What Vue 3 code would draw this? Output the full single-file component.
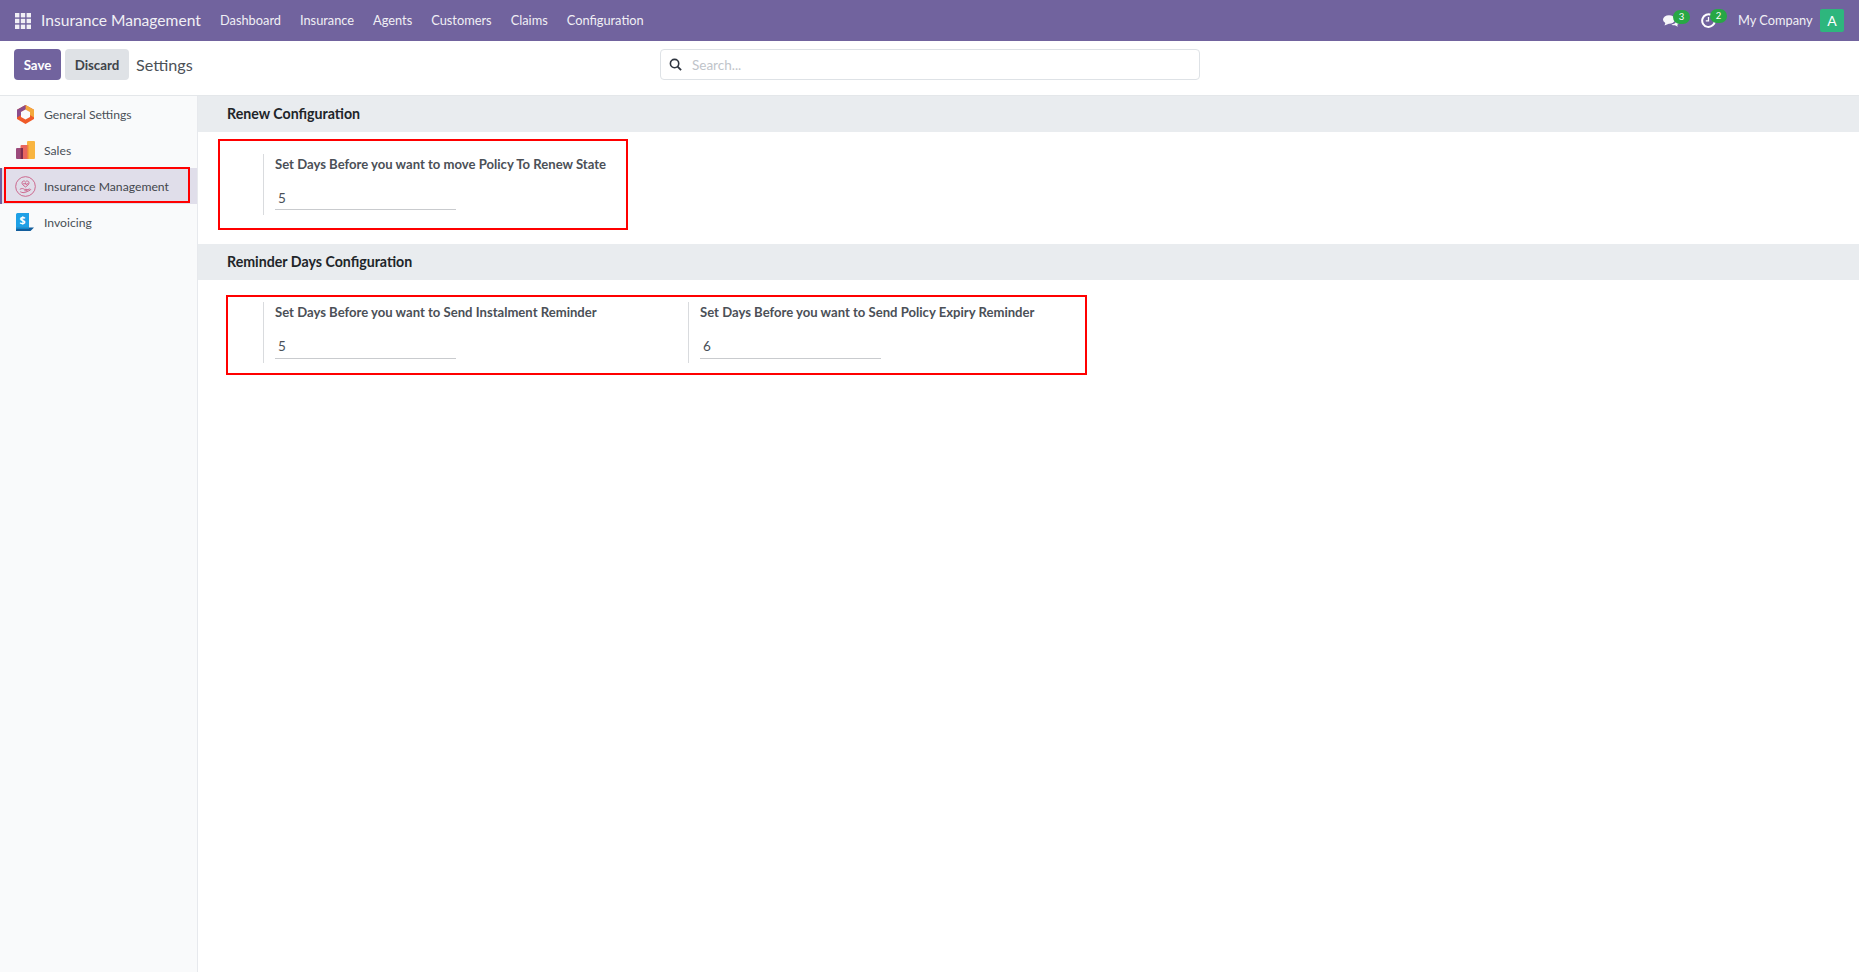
<script setup>
const menus = ['Dashboard', 'Insurance', 'Agents', 'Customers', 'Claims', 'Configuration']
</script>

<template>
  <div class="page">
    <header class="navbar">
      <svg class="apps" width="16" height="16" viewBox="0 0 16 16" fill="#fff">
        <g opacity=".9">
          <rect x="0" y="0" width="4.4" height="4.4" /><rect x="5.8" y="0" width="4.4" height="4.4" /><rect x="11.6" y="0" width="4.4" height="4.4" />
          <rect x="0" y="5.8" width="4.4" height="4.4" /><rect x="5.8" y="5.8" width="4.4" height="4.4" /><rect x="11.6" y="5.8" width="4.4" height="4.4" />
          <rect x="0" y="11.6" width="4.4" height="4.4" /><rect x="5.8" y="11.6" width="4.4" height="4.4" /><rect x="11.6" y="11.6" width="4.4" height="4.4" />
        </g>
      </svg>
      <span class="brand">Insurance Management</span>
      <nav class="menu"><span v-for="m in menus" :key="m">{{ m }}</span></nav>
      <div class="systray">
        <span class="tray-item">
          <svg width="16" height="12" viewBox="0 0 16 12" fill="#fff" opacity=".95"><ellipse cx="6" cy="4.500" rx="6" ry="4.300" /><path d="M2.500 7.500L1.500 10.500 6.500 8.500z" /><path d="M13.500 4.500c2 1 3 2.800 1.800 4.400-.3.400-.7.700-1.100.9l.6 2-2.900-1.500c-1.300.2-2.600-.1-3.500-.8 2.800 0 5.500-2 5.100-5z" /></svg>
          <b class="badge chat">3</b>
        </span>
        <span class="tray-item clock">
          <svg width="15" height="15" viewBox="0 0 15 15" fill="none" stroke="#fff" stroke-width="2"><path d="M10.500 2.100A6.300 6.300 0 1 0 13.800 7.500" /><path d="M7.500 4v3.800H4.800" stroke-width="1.300" /></svg>
          <b class="badge act">2</b>
        </span>
        <span class="company">My Company</span>
        <span class="avatar">A</span>
      </div>
    </header>

    <div class="controlbar">
      <div class="actions">
        <button class="btn primary">Save</button>
        <button class="btn secondary">Discard</button>
        <span class="crumb">Settings</span>
      </div>
      <div class="search">
        <svg width="13" height="13" viewBox="0 0 14 14" fill="none" stroke="#2f3540" stroke-width="1.700"><circle cx="6" cy="6" r="4.500" /><path d="M9.300 9.300L13 13" stroke-width="2" /></svg>
        <span>Search...</span>
      </div>
    </div>

    <div class="body">
      <aside class="sidebar">
        <div class="tab">
          <span class="ico"><svg width="17" height="19" viewBox="0 0 17 19">
            <path d="M8.500 0L17 4.800V14L8.500 19 0 14V4.800z" fill="#f05a28" />
            <path d="M8.500 0L17 4.800V12.500L13 10V7L8.500 4.500z" fill="#f4a93c" />
            <path d="M8.500 0L0 4.800V12.500L4 10V7L8.500 4.500z" fill="#8a4d8c" />
            <path d="M8.500 4.500L13 7v5l-4.500 2.500L4 12V7z" fill="#f9fafb" />
          </svg></span>
          <span>General Settings</span>
        </div>
        <div class="tab">
          <span class="ico"><svg width="19" height="18" viewBox="0 0 19 18"><rect x="0" y="7" width="7" height="11" rx="1" fill="#9c4a7c" /><rect x="4.500" y="4" width="7.500" height="14" rx="1" fill="#e9665e" /><rect x="4.500" y="7" width="2.500" height="11" fill="#7d2c4e" /><rect x="11" y="0" width="8" height="18" rx="1" fill="#f9b541" /><rect x="11" y="4" width="1.500" height="14" fill="#ee8140" /></svg></span>
          <span>Sales</span>
        </div>
        <div class="tab active">
          <span class="ico"><svg width="21" height="21" viewBox="0 0 22 22" fill="none" stroke="#c9557f" stroke-width=".9">
            <circle cx="11" cy="11" r="10.300" />
            <path d="M11 11.500C8.500 9.800 7.300 8.700 7.300 7.200a2 2 0 0 1 3.700-1 2 2 0 0 1 3.700 1c0 1.500-1.200 2.600-3.700 4.300z" />
            <path d="M8.400 8.200h1.800l.7-1 .8 2 .7-1h1.600" />
            <path d="M5 14c2-1.200 3.500-1 5 0h2c1 .3 1 1.400 0 1.500h-2.200M5.500 16.500c2 1 3.800 1.200 5.500.6l5-2.300c.8-.6 0-1.500-1-1.100l-3 1" />
          </svg></span>
          <span>Insurance Management</span>
          <i class="mark sidebar-mark"></i>
        </div>
        <div class="tab">
          <span class="ico"><svg width="18" height="18" viewBox="0 0 18 18"><path d="M0 1.500A1.500 1.500 0 0 1 1.500 0H13v14.500H0z" fill="#1ea0e6" /><path d="M0 14.500A2 2 0 0 0 2 18h12.500l3.500-3.500z" fill="#135d9c" /><path d="M0 14.500h13V16H2a2 2 0 0 0-2 .8z" fill="#0b8ad0" /><text x="6.500" y="11.300" text-anchor="middle" font-size="10.500" font-weight="700" fill="#fff" font-family="Noto Sans, sans-serif">$</text></svg></span>
          <span>Invoicing</span>
        </div>
      </aside>

      <main class="content">
        <h2 class="section-title">Renew Configuration</h2>
        <section class="settings">
          <div class="setting">
            <label>Set Days Before you want to move Policy To Renew State</label>
            <div class="field">5</div>
          </div>
          <i class="mark renew-mark"></i>
        </section>

        <h2 class="section-title">Reminder Days Configuration</h2>
        <section class="settings lower">
          <div class="setting">
            <label>Set Days Before you want to Send Instalment Reminder</label>
            <div class="field">5</div>
          </div>
          <div class="setting">
            <label>Set Days Before you want to Send Policy Expiry Reminder</label>
            <div class="field">6</div>
          </div>
          <i class="mark reminder-mark"></i>
        </section>
      </main>
    </div>
  </div>
</template>

<style>
html, body { margin: 0; background: #fff; }
</style>

<style scoped>
.page {
  width: 1859px;
  height: 972px;
  display: flex;
  flex-direction: column;
  overflow: hidden;
  font-family: Lato, "Noto Sans", sans-serif;
  font-size: 13.500px;
  color: #495057;
}
.navbar {
  height: 41px;
  flex: none;
  background: #71639e;
  color: #fff;
  display: flex;
  align-items: center;
  padding: 0 15px;
  box-sizing: border-box;
}
.apps { flex: none; }
.brand { margin: 0 0 2px 10px; font-size: 15.600px; opacity: .9; width: 161px; white-space: nowrap; }
.menu { display: flex; gap: 18px; margin: 0 0 2px 18px; font-size: 12.800px; opacity: .9; }
.menu span:nth-child(n+2) { margin-left: 1px; }
.systray { margin-left: auto; display: flex; align-items: center; }
.tray-item { position: relative; display: flex; align-items: center; width: 38px; }
.clock { width: 37px; }
.badge {
  position: absolute;
  left: 10px;
  top: -5px;
  width: 17px;
  height: 14px;
  border-radius: 7px;
  background: #28a745;
  font-size: 9.500px;
  font-weight: 400;
  line-height: 14px;
  text-align: center;
}
.badge.act { left: 9px; top: -4px; }
.company { width: 72px; margin: 0 10px 2px 0; font-size: 12.800px; opacity: .9; white-space: nowrap; }
.avatar {
  width: 24px;
  height: 23px;
  border-radius: 2px;
  background: #2eb67d;
  text-align: center;
  line-height: 23px;
  font-size: 14px;
}
.controlbar {
  height: 55px;
  flex: none;
  display: flex;
  align-items: center;
  padding: 0 0 7px 14px;
  box-sizing: border-box;
  border-bottom: 1px solid #e4e7ea;
}
.actions { display: flex; align-items: center; width: 646px; }
.btn {
  height: 31px;
  border: 0;
  border-radius: 4px;
  font: 700 13.300px Lato, "Noto Sans", sans-serif;
  padding: 0;
}
.primary { width: 47px; background: #71639e; color: #fff; }
.secondary { width: 64px; margin-left: 4px; background: #dfe2e6; color: #3f444a; }
.crumb { margin-left: 7px; font-size: 16.200px; color: #4c5157; }
.search {
  width: 540px;
  height: 31px;
  border: 1px solid #dee2e6;
  border-radius: 4px;
  display: flex;
  align-items: center;
  gap: 10px;
  padding-left: 8px;
  box-sizing: border-box;
  color: #bfc4ca;
}
.body { flex: 1; display: flex; min-height: 0; }
.sidebar {
  width: 197px;
  flex: none;
  background: #f9fafb;
  border-right: 1px solid #e7e9ed;
  font-size: 12.200px;
}
.tab {
  height: 36px;
  display: flex;
  align-items: center;
  position: relative;
  padding-left: 14px;
  white-space: nowrap;
}
.ico { width: 22px; margin-right: 8px; display: flex; justify-content: center; flex: none; }
.tab.active { background: #e0deea; color: #43474d; box-shadow: inset 2px 0 0 #71639e; }
.content { flex: 1; min-width: 0; }
.section-title {
  margin: 0;
  height: 36px;
  background: #e9ecef;
  padding-left: 29px;
  font-size: 14.200px;
  font-weight: 700;
  line-height: 36px;
  color: #212529;
}
.settings {
  display: flex;
  position: relative;
  height: 112px;
  box-sizing: border-box;
  padding: 22px 0 0 65px;
}
.setting {
  width: 412px;
  height: 61px;
  border-left: 1px solid #d9dbde;
  padding-left: 11px;
  margin-right: 1px;
  display: flex;
  flex-direction: column;
  font-size: 13.100px;
}
.setting label { font-weight: 700; line-height: 18px; white-space: nowrap; margin-top: 1px; color: #4b5057; }
.field {
  width: 181px;
  height: 25px;
  margin-top: 12px;
  padding-left: 3px;
  line-height: 26px;
  font-size: 13.500px;
  border-bottom: 1px solid #c9cbce;
  box-sizing: border-box;
}
.lower .field { height: 26px; }
.mark { position: absolute; border: 2px solid #f00; box-sizing: border-box; pointer-events: none; }
.sidebar-mark { left: 4px; top: -1px; width: 186px; height: 36px; }
.renew-mark { left: 20px; top: 7px; width: 410px; height: 91px; }
.reminder-mark { left: 28px; top: 15px; width: 861px; height: 80px; }
</style>
